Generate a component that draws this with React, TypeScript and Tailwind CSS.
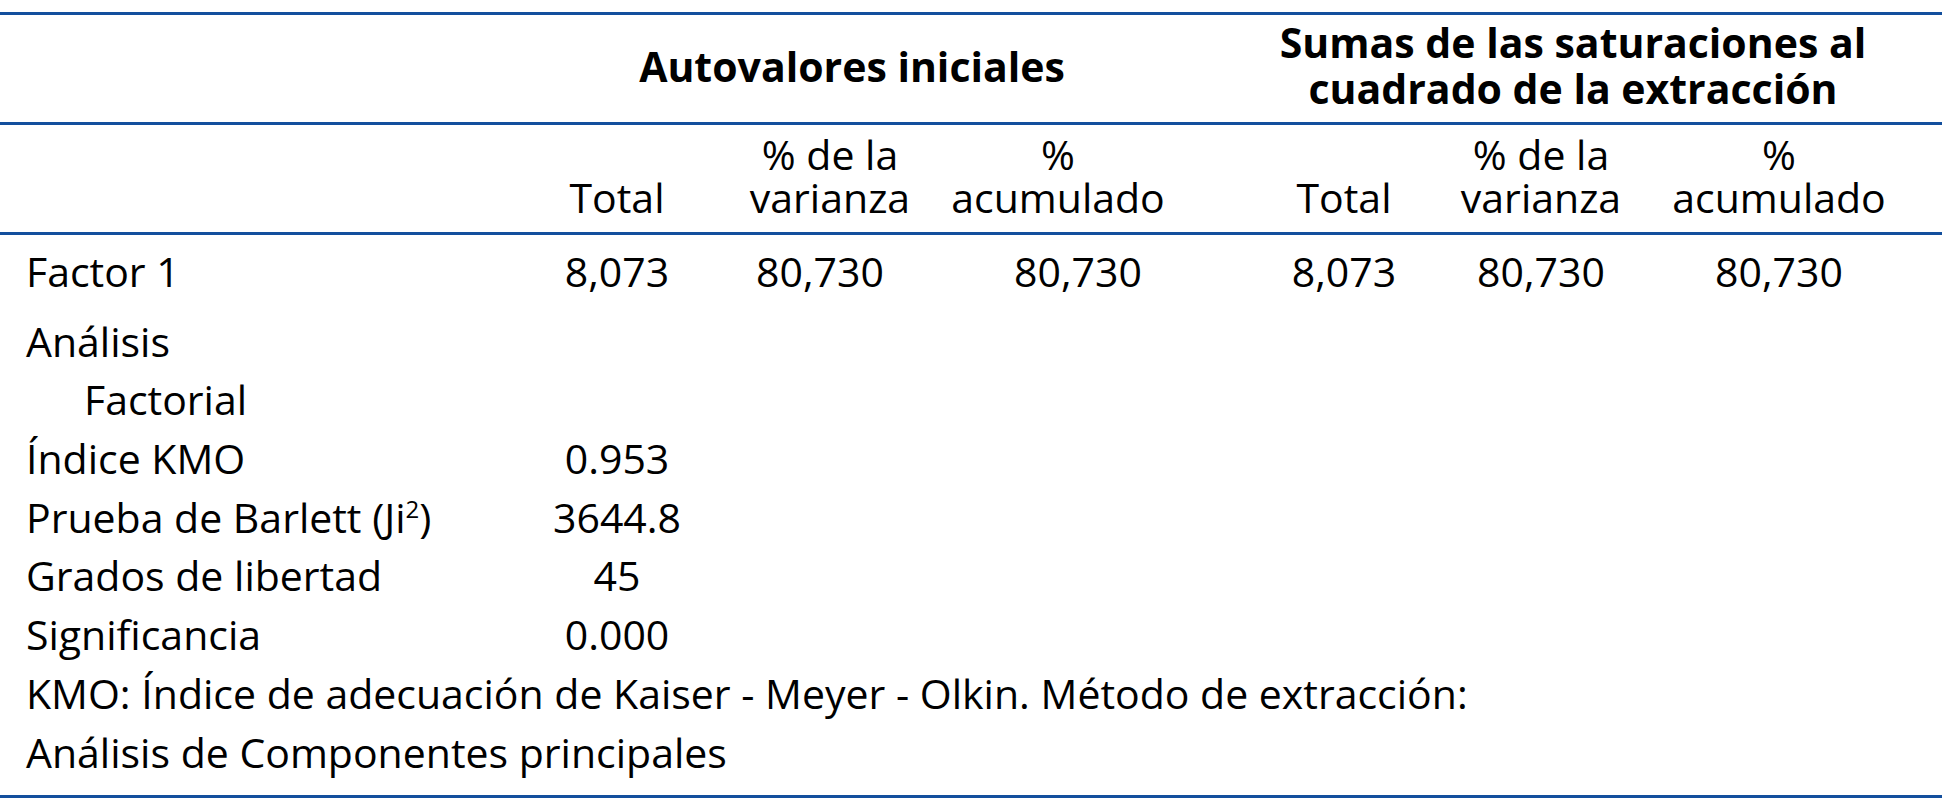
import React from 'react';

const COLS = 'grid grid-cols-[498px_238px_178px_308px_244px_150px_1fr]';

const stats: { label: string; value: string; sup?: boolean }[] = [
  { label: 'Índice KMO', value: '0.953' },
  { label: 'Prueba de Barlett (Ji', value: '3644.8', sup: true },
  { label: 'Grados de libertad', value: '45' },
  { label: 'Significancia', value: '0.000' },
];

const HeaderCell: React.FC<{ top?: string; bottom: string; className?: string }> = ({ top, bottom, className = '' }) => (
  <div className={`flex flex-col items-center justify-end whitespace-nowrap ${className}`}>
    {top && <span>{top}</span>}
    <span>{bottom}</span>
  </div>
);

const App: React.FC = () => {
  return (
    <div className="min-h-[803px] w-full bg-white pt-[12px] font-['Open_Sans',sans-serif] text-[41px] text-black">
      {/* fila de títulos agrupados */}
      <div className="grid h-[113px] grid-cols-[498px_724px_1fr] border-y-[3px] border-[#134f9d] font-bold leading-[46px]">
        <div />
        <div className="flex items-center justify-center pb-[5px] pr-[16px]">Autovalores iniciales</div>
        <div className="flex flex-col items-center justify-center pb-[7px] pr-[18px] text-center">
          <span>Sumas de las saturaciones al</span>
          <span>cuadrado de la extracción</span>
        </div>
      </div>

      {/* fila de subtítulos */}
      <div className={`${COLS} h-[110px] border-b-[3px] border-[#134f9d] pb-[13px] leading-[43px]`}>
        <div />
        <HeaderCell bottom="Total" />
        <HeaderCell top="% de la" bottom="varianza" className="pl-[10px]" />
        <HeaderCell top="%" bottom="acumulado" className="pr-[20px]" />
        <HeaderCell bottom="Total" />
        <HeaderCell top="% de la" bottom="varianza" />
        <HeaderCell top="%" bottom="acumulado" />
      </div>

      {/* cuerpo */}
      <div className="h-[563px] border-b-[3px] border-[#134f9d] pt-[7px] leading-[58.7px]">
        <div className={`${COLS} pb-[11px]`}>
          <div className="pl-[26px]">Factor 1</div>
          <div className="text-center">8,073</div>
          <div className="pr-[10px] text-center">80,730</div>
          <div className="pl-[20px] text-center">80,730</div>
          <div className="text-center">8,073</div>
          <div className="text-center">80,730</div>
          <div className="text-center">80,730</div>
        </div>

        <div className={COLS}>
          <div className="pl-[26px]">
            <div>Análisis</div>
            <div className="pl-[58px]">Factorial</div>
          </div>
        </div>

        {stats.map((s) => (
          <div key={s.label} className={`${COLS} h-[58.7px]`}>
            <div className="whitespace-nowrap pl-[26px]">
              {s.label}
              {s.sup && (
                <>
                  <span className="relative -top-[15px] align-baseline text-[24px] leading-none">2</span>)
                </>
              )}
            </div>
            <div className="text-center">{s.value}</div>
          </div>
        ))}

        <div className="pl-[26px]">
          KMO: Índice de adecuación de Kaiser - Meyer - Olkin. Método de extracción:
          <br />
          Análisis de Componentes principales
        </div>
      </div>
    </div>
  );
};

export default App;
